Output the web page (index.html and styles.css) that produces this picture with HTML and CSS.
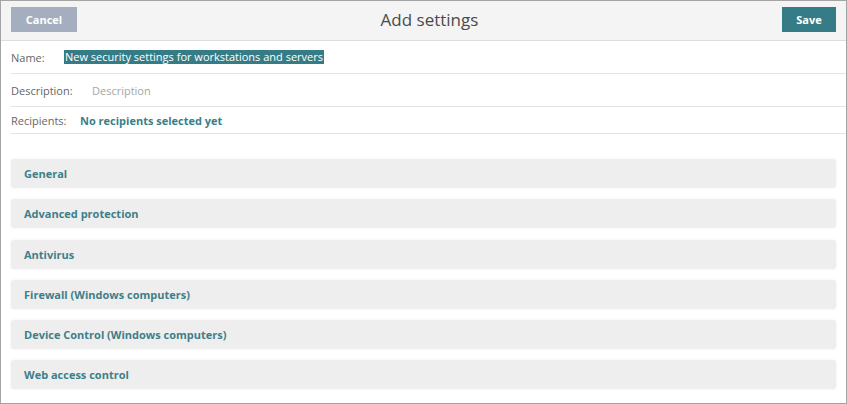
FILE: index.html
```html
<!DOCTYPE html>
<html>
<head>
<meta charset="utf-8">
<link rel="stylesheet" href="styles.css">
</head>
<body>
<div class="panel">
  <div class="header">
    <button class="btn btn-cancel">Cancel</button>
    <div class="title">Add settings</div>
    <button class="btn btn-save">Save</button>
  </div>
  <div class="fields">
    <div class="field field-name">
      <span class="label">Name:</span>
      <span class="value selected">New security settings for workstations and servers</span>
    </div>
    <div class="field field-desc">
      <span class="label">Description:</span>
      <span class="value placeholder">Description</span>
    </div>
    <div class="field field-recip">
      <span class="label">Recipients:</span>
      <span class="value link">No recipients selected yet</span>
    </div>
  </div>
  <div class="sections">
    <div class="section">General</div>
    <div class="section">Advanced protection</div>
    <div class="section">Antivirus</div>
    <div class="section">Firewall (Windows computers)</div>
    <div class="section">Device Control (Windows computers)</div>
    <div class="section">Web access control</div>
  </div>
</div>
</body>
</html>
```
FILE: styles.css
```css
* { box-sizing: border-box; }
html, body { margin: 0; padding: 0; background: #fff; }
body { font-family: "Open Sans", "Noto Sans", sans-serif; }

.panel {
  width: 847px;
  height: 404px;
  border: 1px solid #a4a4a4;
  background: #fff;
  display: flex;
  flex-direction: column;
}

.header {
  height: 40px;
  background: #f4f4f4;
  border-bottom: 1px solid #dedede;
  display: flex;
  align-items: flex-start;
  justify-content: space-between;
  padding: 6px 10px 0 10px;
}

.btn {
  border: none;
  color: #fff;
  font-family: "Open Sans", sans-serif;
  font-weight: 700;
  font-size: 11px;
  height: 25px;
  padding: 0;
  cursor: pointer;
}
.btn-cancel { background: #a5aebf; width: 66px; }
.btn-save { background: #367c86; width: 54px; }

.title {
  font-size: 17px;
  color: #4a4a4a;
  line-height: 25px;
}

.fields {
  padding-left: 10px;
}
.field {
  display: flex;
  align-items: center;
  border-bottom: 1px solid #e3e3e3;
  font-size: 11px;
  color: #6a6a6a;
}
.field-name, .field-desc { height: 33px; }
.field-recip { height: 27px; }

.label { color: #666; }
.field-name .label { width: 53px; }
.field-desc .label { width: 81px; }
.field-recip .label { width: 69px; }

.selected {
  background: #367c86;
  color: #fff;
  padding: 0 1px;
  line-height: 14px;
  font-size: 11px;
}
.placeholder { color: #a6a6a6; }
.link { color: #3a7f89; font-weight: 700; }

.sections {
  padding: 25px 10px 0 10px;
  display: flex;
  flex-direction: column;
  gap: 11.3px;
}
.section {
  height: 29px;
  background: #eeeeee;
  border-radius: 3px;
  box-shadow: 0 0 3px rgba(0,0,0,0.06);
  display: flex;
  align-items: center;
  padding-left: 13px;
  font-size: 11px;
  font-weight: 700;
  color: #3d7f89;
}
```
